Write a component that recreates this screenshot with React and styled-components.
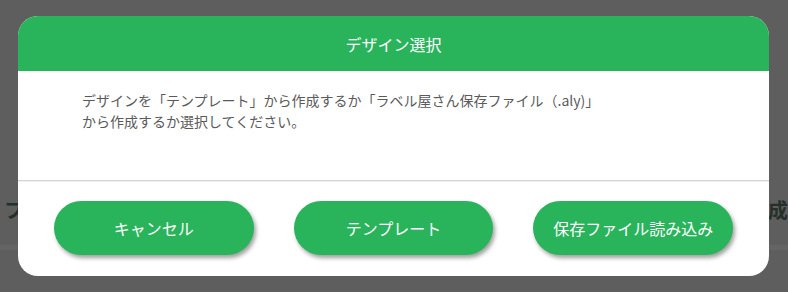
import React from "react";
import styled, { createGlobalStyle } from "styled-components";

const GlobalStyle = createGlobalStyle`
  html, body {
    margin: 0;
    padding: 0;
    background: #5e5e5e;
  }
  body {
    font-family: "Noto Sans CJK JP", "Noto Sans", sans-serif;
  }
`;

const Page = styled.div`
  position: relative;
  width: 788px;
  height: 292px;
  overflow: hidden;
  background: #5e5e5e;
`;

const BackTitleRow = styled.div`
  display: flex;
  justify-content: space-between;
  align-items: center;
  padding: 196px 0 0 4px;
  font-size: 20px;
  font-weight: 700;
  line-height: 28px;
  color: #26302a;
`;

const BackRule = styled.div`
  margin-top: 21px;
  height: 5px;
  background: #646464;
`;

const Modal = styled.div`
  position: absolute;
  left: 18px;
  top: 16px;
  width: 751px;
  background: #fff;
  border-radius: 20px;
  overflow: hidden;
`;

const Header = styled.div`
  height: 55px;
  display: flex;
  align-items: center;
  justify-content: center;
  background: #29b45c;
  color: #fff;
  font-size: 16px;
`;

const Body = styled.div`
  box-sizing: border-box;
  height: 109px;
  padding: 19px 64px 0;
  font-size: 14px;
  line-height: 21px;
  color: #5a5a5a;
`;

const Footer = styled.div`
  display: flex;
  gap: 40px;
  padding: 20px 36px 21px;
  border-top: 1px solid #d2d2d2;
  box-shadow: inset 0 1px 1px rgba(0, 0, 0, 0.06);
`;

const Button = styled.button`
  width: 200px;
  height: 54px;
  border: none;
  border-radius: 27px;
  background: #29b45c;
  color: #fff;
  font-family: inherit;
  font-size: 16px;
  box-shadow: 2px 3px 4px rgba(0, 0, 0, 0.38);
  cursor: pointer;
  padding: 0;
`;

export default function App() {
  return (
    <>
      <GlobalStyle />
      <Page>
        <BackTitleRow>
          <span>フ</span>
          <span>作成</span>
        </BackTitleRow>
        <BackRule />
        <Modal>
          <Header>デザイン選択</Header>
          <Body>
            デザインを「テンプレート」から作成するか「ラベル屋さん保存ファイル（.aly)」
            <br />
            から作成するか選択してください。
          </Body>
          <Footer>
            <Button>キャンセル</Button>
            <Button>テンプレート</Button>
            <Button>保存ファイル読み込み</Button>
          </Footer>
        </Modal>
      </Page>
    </>
  );
}
